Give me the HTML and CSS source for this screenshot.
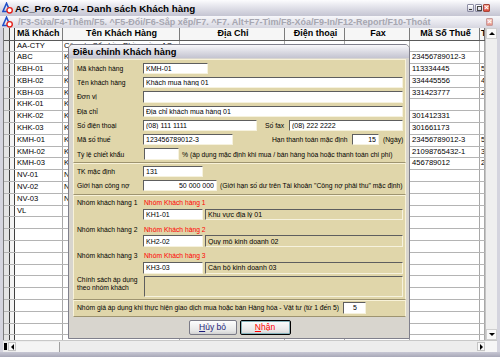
FILE: index.html
```html
<!DOCTYPE html>
<html lang="vi">

<head>
    <meta charset="UTF-8">
    <meta name="viewport" content="width=device-width, initial-scale=1.0">
    <title>AC_Pro 9.704 - Danh sách Khách hàng</title>
    <link rel="stylesheet" href="styles.css">
</head>

<body>
    <div class="window">
        <div class="titlebar">
            <svg class="app-icon" viewBox="0 0 11 12">
                <polygon points="4.5,1.2 0.8,9.6 8.2,9.6" fill="none" stroke="#1f4fc8" stroke-width="1.5" />
                <circle cx="7.6" cy="8.3" r="2.7" fill="#fff" stroke="#e3201c" stroke-width="1.4" />
            </svg>
            <span class="title">AC_Pro 9.704 - Danh sách Khách hàng</span>
            <div class="caption-buttons">
                <span class="cbtn cbtn-min"></span>
                <span class="cbtn cbtn-max"></span>
                <span class="cbtn cbtn-close"></span>
            </div>
        </div>

        <div class="childbar">
            <svg class="app-icon" viewBox="0 0 11 12">
                <polygon points="4.5,1.2 0.8,9.6 8.2,9.6" fill="none" stroke="#1f4fc8" stroke-width="1.5" />
                <circle cx="7.6" cy="8.3" r="2.7" fill="#fff" stroke="#e3201c" stroke-width="1.4" />
            </svg>
            <span class="hotkeys">/F3-Sửa/F4-Thêm/F5. ^F5-Đổi/F6-Sắp xếp/F7. ^F7. Alt+F7-Tìm/F8-Xóa/F9-In/F12-Report/F10-Thoát</span>
            <span class="cbtn cbtn-close inactive"></span>
        </div>

        <div class="client">
            <div class="grid">
                <div class="row head">
                    <span></span><span></span><span class="left">Mã Khách</span><span>Tên Khách Hàng</span><span>Địa Chỉ</span><span>Điện thoại</span><span>Fax</span><span>Mã Số Thuế</span><span class="left">T</span>
                </div>
                <div class="row"><span></span><span></span><span>AA-CTY</span><span>Công ty Cổ phần Phần mềm AC</span><span></span><span></span><span></span><span></span><span></span></div>
                <div class="row"><span></span><span></span><span>ABC</span><span>K</span><span></span><span></span><span></span><span>23456789012-3</span><span></span></div>
                <div class="row"><span></span><span></span><span>KBH-01</span><span>K</span><span></span><span></span><span></span><span>113334445</span><span>5</span></div>
                <div class="row"><span></span><span></span><span>KBH-02</span><span>K</span><span></span><span></span><span></span><span>334445556</span><span>4</span></div>
                <div class="row"><span></span><span></span><span>KBH-03</span><span>K</span><span></span><span></span><span></span><span>331423777</span><span>2</span></div>
                <div class="row"><span></span><span></span><span>KHK-01</span><span>K</span><span></span><span></span><span></span><span></span><span></span></div>
                <div class="row"><span></span><span></span><span>KHK-02</span><span>K</span><span></span><span></span><span></span><span>301412331</span><span></span></div>
                <div class="row"><span></span><span></span><span>KHK-03</span><span>K</span><span></span><span></span><span></span><span>301661173</span><span></span></div>
                <div class="row"><span></span><span></span><span>KMH-01</span><span>K</span><span></span><span></span><span></span><span>23456789012-3</span><span>5</span></div>
                <div class="row"><span></span><span></span><span>KMH-02</span><span>K</span><span></span><span></span><span></span><span>21098765432-1</span><span>3</span></div>
                <div class="row"><span></span><span></span><span>KMH-03</span><span>K</span><span></span><span></span><span></span><span>456789012</span><span>2</span></div>
                <div class="row"><span></span><span></span><span>NV-01</span><span>N</span><span></span><span></span><span></span><span></span><span></span></div>
                <div class="row"><span></span><span></span><span>NV-02</span><span>N</span><span></span><span></span><span></span><span></span><span></span></div>
                <div class="row"><span></span><span></span><span>NV-03</span><span>N</span><span></span><span></span><span></span><span></span><span></span></div>
                <div class="row"><span></span><span></span><span>VL</span><span></span><span></span><span></span><span></span><span></span><span></span></div>
                <div class="row"><span></span><span></span><span></span><span></span><span></span><span></span><span></span><span></span><span></span></div>
                <div class="row"><span></span><span></span><span></span><span></span><span></span><span></span><span></span><span></span><span></span></div>
                <div class="row"><span></span><span></span><span></span><span></span><span></span><span></span><span></span><span></span><span></span></div>
                <div class="row"><span></span><span></span><span></span><span></span><span></span><span></span><span></span><span></span><span></span></div>
                <div class="row"><span></span><span></span><span></span><span></span><span></span><span></span><span></span><span></span><span></span></div>
                <div class="row"><span></span><span></span><span></span><span></span><span></span><span></span><span></span><span></span><span></span></div>
                <div class="row"><span></span><span></span><span></span><span></span><span></span><span></span><span></span><span></span><span></span></div>
                <div class="row"><span></span><span></span><span></span><span></span><span></span><span></span><span></span><span></span><span></span></div>
                <div class="row"><span></span><span></span><span></span><span></span><span></span><span></span><span></span><span></span><span></span></div>
                <div class="row"><span></span><span></span><span></span><span></span><span></span><span></span><span></span><span></span><span></span></div>
                <div class="row"><span></span><span></span><span></span><span></span><span></span><span></span><span></span><span></span><span></span></div>
            </div>
            <div class="vscroll">
                <span class="arrow up"></span>
                <span class="arrow down"></span>
            </div>
        </div>

        <div class="hscroll">
            <span class="hs-mark"></span>
            <span class="hs-btn hs-left"></span>
            <span class="hs-fixed"></span>
            <span class="hs-track"></span>
            <span class="hs-btn hs-right"></span>
            <span class="hs-grip"></span>
        </div>
        <div class="frame-bottom"></div>

        <!-- Dialog: Điều chỉnh Khách hàng -->
        <div class="dialog">
            <div class="dialog-title">Điều chỉnh Khách hàng</div>
            <div class="dialog-body">
                <div class="panel">
                    <div class="section sec-main">
                        <div class="field">
                            <span class="label">Mã khách hàng</span>
                            <input class="box w-code" type="text" value="KMH-01">
                        </div>
                        <div class="field">
                            <span class="label">Tên khách hàng</span>
                            <input class="box grow" type="text" value="Khách mua hàng 01">
                        </div>
                        <div class="field">
                            <span class="label">Đơn vị</span>
                            <input class="box grow" type="text" value="">
                        </div>
                        <div class="field">
                            <span class="label">Địa chỉ</span>
                            <input class="box grow" type="text" value="Địa chỉ khách mua hàng 01">
                        </div>
                        <div class="field">
                            <span class="label">Số điện thoại</span>
                            <input class="box w-phone" type="text" value="(08) 111 1111">
                            <span class="fax-label">Số fax</span>
                            <input class="box grow" type="text" value="(08) 222 2222">
                        </div>
                        <div class="field">
                            <span class="label">Mã số thuế</span>
                            <input class="box w-tax" type="text" value="123456789012-3">
                            <span class="term-label">Hạn thanh toán mặc định</span>
                            <input class="box w-days num" type="text" value="15">
                            <span class="note">(Ngày)</span>
                        </div>
                        <div class="field">
                            <span class="label">Tỷ lệ chiết khẩu</span>
                            <input class="box w-rate" type="text" value="">
                            <span class="note">% (áp dụng mặc định khi mua / bán hàng hóa hoặc thanh toán chi phí)</span>
                        </div>
                    </div>

                    <div class="section sec-account">
                        <div class="field">
                            <span class="label">TK mặc định</span>
                            <input class="box w-group" type="text" value="131">
                        </div>
                        <div class="field">
                            <span class="label">Giới hạn công nợ</span>
                            <input class="box w-limit num" type="text" value="50 000 000">
                            <span class="note">(Giới hạn số dư trên Tài khoản "Công nợ phải thu" mặc định)</span>
                        </div>
                    </div>

                    <div class="section sec-groups">
                        <div class="group">
                            <div class="group-head">
                                <span class="label">Nhóm khách hàng 1</span>
                                <span class="group-name">Nhóm Khách hàng 1</span>
                            </div>
                            <div class="field">
                                <span class="label"></span>
                                <input class="box w-group" type="text" value="KH1-01">
                                <input class="box grow desc" type="text" value="Khu vực địa lý 01" readonly>
                            </div>
                        </div>
                        <div class="group">
                            <div class="group-head">
                                <span class="label">Nhóm khách hàng 2</span>
                                <span class="group-name">Nhóm Khách hàng 2</span>
                            </div>
                            <div class="field">
                                <span class="label"></span>
                                <input class="box w-group" type="text" value="KH2-02">
                                <input class="box grow desc" type="text" value="Quy mô kinh doanh 02" readonly>
                            </div>
                        </div>
                        <div class="group">
                            <div class="group-head">
                                <span class="label">Nhóm khách hàng 3</span>
                                <span class="group-name">Nhóm Khách hàng 3</span>
                            </div>
                            <div class="field">
                                <span class="label"></span>
                                <input class="box w-group" type="text" value="KH3-03">
                                <input class="box grow desc" type="text" value="Cán bộ kinh doanh 03" readonly>
                            </div>
                        </div>
                        <div class="field policy">
                            <span class="label">Chính sách áp dụng<br>theo nhóm khách</span>
                            <div class="box grow desc"></div>
                        </div>
                    </div>

                    <div class="section sec-price">
                        <div class="field">
                            <span class="price-label">Nhóm giá áp dụng khi thực hiện giao dịch mua hoặc bán Hàng hóa - Vật tư (từ 1 đến 5)</span>
                            <input class="box w-price" type="text" value="5">
                        </div>
                    </div>
                </div>

                <div class="buttons">
                    <button class="btn btn-cancel"><u>H</u>ủy bỏ</button>
                    <button class="btn btn-ok"><u>N</u>hận</button>
                </div>
            </div>
        </div>
    </div>
</body>

</html>
```

FILE: styles.css
```css
* {
    box-sizing: border-box;
}

body {
    margin: 0;
    font-family: "Liberation Sans", Arial, sans-serif;
    color: #000;
}

.window {
    position: relative;
    width: 500px;
    height: 357px;
    overflow: hidden;
    display: flex;
    flex-direction: column;
    background: #d4d4de;
}

/* title bars */
.titlebar {
    height: 16px;
    display: flex;
    align-items: center;
    gap: 2px;
    padding: 0 10px 0 2px;
    background: linear-gradient(#fcfcfe, #e2e2ea 45%, #c4c4d2);
}

.app-icon {
    width: 11px;
    height: 12px;
    flex: none;
}

.title {
    flex: 1;
    font-size: 9.8px;
    font-weight: bold;
    white-space: nowrap;
}

.caption-buttons {
    display: flex;
    gap: 1px;
}

.cbtn {
    position: relative;
    flex: none;
    width: 7px;
    height: 8px;
    border: 1px solid #8b8ba3;
    border-radius: 1px;
    background: linear-gradient(#ffffff, #cdcddb);
}

.cbtn-min::after {
    content: "";
    position: absolute;
    left: 1px;
    bottom: 1px;
    width: 3px;
    height: 1px;
    background: #333;
}

.cbtn-max::after {
    content: "";
    position: absolute;
    left: 1px;
    top: 1px;
    width: 3px;
    height: 3px;
    border: 1px solid #444;
}

.cbtn-close {
    border-color: #a8463a;
    background: linear-gradient(#f6a896, #d9483a);
}

.cbtn-close::after {
    content: "\00d7";
    position: absolute;
    inset: 0;
    color: #fff;
    font-size: 8px;
    font-weight: bold;
    line-height: 6px;
    text-align: center;
}

.cbtn-close.inactive {
    border-color: #c89a98;
    background: linear-gradient(#f6cac2, #e4948a);
}

.childbar {
    height: 12px;
    display: flex;
    align-items: center;
    gap: 5px;
    padding: 0 7px 0 2px;
    background: linear-gradient(#f7f7fa, #e4e4ec 60%, #d6d6e0);
}

.hotkeys {
    flex: 1;
    font-size: 9px;
    font-weight: bold;
    color: #a6a6b0;
    white-space: nowrap;
    overflow: hidden;
}

/* grid */
.client {
    height: 312px;
    display: flex;
    padding: 0 3px;
}

.grid {
    width: 482px;
    background: #fff;
    border-left: 1px solid #7a7a7a;
    overflow: hidden;
}

.row {
    display: grid;
    grid-template-columns: 6px 5px 48px 117px 105px 60px 65px 70px 5px;
    height: 11.8px;
    border-bottom: 1px solid #b4b4b4;
    font-size: 7.6px;
}

.row span {
    border-right: 1px solid #a8a8a8;
    padding-left: 2px;
    white-space: nowrap;
    overflow: hidden;
    line-height: 10.8px;
}

.row span:nth-child(1) {
    background: #e4e4e4;
    border-right-color: #404040;
    padding: 0;
}

.row span:nth-child(2) {
    background: #f4f4f4;
    border-right-color: #404040;
    padding: 0;
}

.row span:nth-child(4) {
    padding-left: 1px;
}

.row span:last-child {
    padding-left: 1px;
}

.head {
    height: 12.5px;
    border-bottom: 1px solid #5a5a5a;
    font-size: 9px;
    font-weight: bold;
    background: #f6f6f6;
}

.head span {
    text-align: center;
    border-right: 1px solid #7c7c7c;
    line-height: 11.5px;
}

.head span.left {
    text-align: left;
}

.vscroll {
    width: 12px;
    background: #efefef;
    border-left: 1px solid #c4c4c4;
    display: flex;
    flex-direction: column;
    justify-content: space-between;
}

.arrow {
    height: 11px;
    display: flex;
    align-items: center;
    justify-content: center;
    background: #f9f9f9;
    border: 1px solid #d0d0d0;
}

.arrow::after {
    content: "";
    border-left: 3px solid transparent;
    border-right: 3px solid transparent;
}

.arrow.up::after {
    border-bottom: 3px solid #000;
}

.arrow.down::after {
    border-top: 3px solid #000;
}

.hscroll {
    height: 12px;
    margin: 0 3px;
    display: flex;
    align-items: center;
    padding-left: 1px;
    background: #ededed;
    border-top: 1px solid #c8c8c8;
}

.hs-mark {
    width: 3px;
    height: 7px;
    background: #000;
}

.hs-btn {
    width: 8px;
    height: 9px;
    margin-left: 1px;
    display: flex;
    align-items: center;
    justify-content: center;
    background: #f8f8f8;
    border: 1px solid #c4c4c4;
}

.hs-btn::after {
    content: "";
    border-top: 3px solid transparent;
    border-bottom: 3px solid transparent;
}

.hs-left::after {
    border-right: 3px solid #000;
}

.hs-right::after {
    border-left: 3px solid #000;
}

.hs-fixed {
    width: 44px;
    height: 10px;
    background: #f4f4f4;
    border-right: 1px solid #a0a0a0;
}

.hs-track {
    flex: 1;
    height: 10px;
}

.hs-grip {
    width: 12px;
    height: 11px;
    background: #f6f6f6;
}

.frame-bottom {
    height: 5px;
    background: linear-gradient(#c8c8d4, #a8a8b8);
}

/* dialog */
.dialog {
    position: absolute;
    left: 68px;
    top: 44px;
    width: 342px;
    height: 295px;
    border: 1px solid #80808c;
    border-radius: 5px 5px 0 0;
    background: #d8d5ce;
    display: flex;
    flex-direction: column;
}

.dialog-title {
    height: 13px;
    flex: none;
    display: flex;
    align-items: center;
    padding-left: 4px;
    font-size: 9.3px;
    font-weight: bold;
    border-radius: 4px 4px 0 0;
    background: linear-gradient(#f8f8fb, #dcdce4 50%, #c4c4d0);
}

.dialog-body {
    padding: 1px 3px 0 4px;
}

.panel {
    background: #e0d6aa;
    font-size: 6.75px;
}

.section {
    display: flex;
    flex-direction: column;
    padding: 0 2px 0 3px;
    border: 1px solid #f8f2d8;
    border-bottom-color: #9e9470;
}

.sec-main {
    gap: 3px;
    padding-top: 2.7px;
    padding-bottom: 2px;
}

.sec-main .field {
    height: 11.3px;
}

.sec-account {
    gap: 2.7px;
    padding-top: 2.2px;
    padding-bottom: 2.7px;
}

.sec-account .field {
    height: 11.3px;
}

.sec-groups {
    gap: 4px;
    padding-top: 1.7px;
    padding-bottom: 2px;
}

.sec-price {
    padding-top: 0.7px;
    padding-bottom: 1.7px;
}

.sec-price .field {
    height: 12.3px;
}

.field {
    display: flex;
    align-items: center;
}

.label {
    width: 66px;
    flex: none;
    white-space: nowrap;
}

.box {
    height: 100%;
    margin: 0;
    padding: 0 2px;
    font-family: inherit;
    font-size: 7px;
    color: #000;
    background: #fff;
    border: 1px solid;
    border-color: #5e5e5e #f6f2de #f6f2de #5e5e5e;
    outline: none;
}

.grow {
    flex: 1;
    min-width: 0;
}

.num {
    text-align: right;
}

.desc {
    background: #e0d6aa;
    margin-left: 2px;
}

.w-code {
    width: 65px;
}

.w-phone {
    width: 114px;
}

.w-tax {
    width: 90px;
}

.w-days {
    width: 27px;
}

.w-rate {
    width: 35px;
    margin-left: 1px;
}

.w-group {
    width: 60px;
}

.w-limit {
    width: 74px;
}

.w-price {
    width: 23px;
    margin-left: 4.5px;
    text-align: center;
}

.fax-label {
    width: 24px;
    margin-left: 8px;
    flex: none;
}

.term-label {
    width: 80px;
    margin-left: 39px;
    flex: none;
    white-space: nowrap;
}

.note {
    margin-left: 3px;
    white-space: nowrap;
}

.w-days + .note {
    margin-left: 4px;
}

.group {
    display: flex;
    flex-direction: column;
}

.group-head {
    height: 10px;
    display: flex;
    align-items: center;
}

.group-name {
    color: #f00;
    padding-left: 1px;
}

.group .field {
    height: 11.5px;
    margin-top: 1.2px;
}

.policy {
    height: 20.7px;
    margin-top: -1.5px;
    align-items: flex-start;
}

.policy .label {
    line-height: 8.3px;
}

.policy .desc {
    margin-left: 1px;
}

.price-label {
    flex: none;
    white-space: nowrap;
}

.buttons {
    display: flex;
    justify-content: center;
    gap: 3px;
    padding-top: 3.3px;
}

.btn {
    height: 15px;
    padding: 0;
    font-family: inherit;
    font-size: 8.5px;
    color: #1c1c7a;
    border: 1px solid #7a7a86;
    border-radius: 2px;
    background: linear-gradient(#fdfdfd, #e6e6e6 75%, #d2d2d2);
}

.btn-cancel {
    width: 48px;
}

.btn-ok {
    width: 51px;
    color: #f00;
    border-color: #000;
    box-shadow: inset 0 0 0 1px #88b4bc;
}
```
